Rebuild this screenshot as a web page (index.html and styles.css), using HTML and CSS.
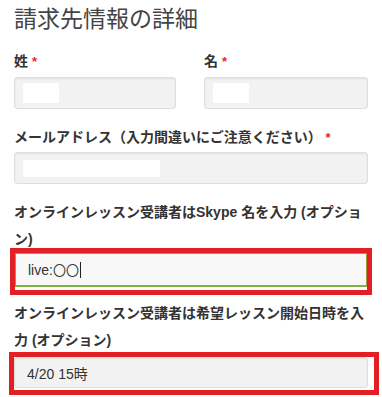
FILE: index.html
```html
<!DOCTYPE html>
<html lang="ja">
<head>
  <meta charset="UTF-8" />
  <meta name="viewport" content="width=device-width,initial-scale=1.0" />
  <title>請求先情報の詳細</title>
  <link rel="stylesheet" href="styles.css">
</head>
<body>
  <div class="billing">
    <h2 class="billing-title">請求先情報の詳細</h2>

    <div class="name-row">
      <div class="form-row">
        <label class="form-label">姓 <span class="required">*</span></label>
        <div class="field"><span class="mask mask-name"></span></div>
      </div>
      <div class="form-row">
        <label class="form-label">名 <span class="required">*</span></label>
        <div class="field"><span class="mask mask-name"></span></div>
      </div>
    </div>

    <div class="form-row row-email">
      <label class="form-label">メールアドレス（入力間違いにご注意ください） <span class="required">*</span></label>
      <div class="field"><span class="mask mask-email"></span></div>
    </div>

    <div class="form-row row-skype">
      <label class="form-label form-label-long">オンラインレッスン受講者はSkype 名を入力 (オプション)</label>
      <div class="mark mark-skype">
        <div class="field field-focus">live:<span class="cjk">〇〇</span><span class="caret"></span></div>
      </div>
    </div>

    <div class="form-row row-date">
      <label class="form-label form-label-long">オンラインレッスン受講者は希望レッスン開始日時を入力 (オプション)</label>
      <div class="mark mark-date">
        <div class="field field-date">4/20 15時</div>
      </div>
    </div>
  </div>
</body>
</html>
```

FILE: styles.css
```css
  body {
    margin: 0;
    background: #fff;
    font-family: "Liberation Sans", "Noto Sans CJK JP", sans-serif;
    color: #333;
  }

  .billing {
    width: 354px;
    padding: 4px 0 0 14px;
  }

  .billing-title {
    margin: 0;
    font-size: 23px;
    line-height: 30px;
    font-weight: normal;
    color: #444;
  }

  .name-row {
    display: grid;
    grid-template-columns: 162px 1fr;
    column-gap: 28px;
    margin-top: 17px;
  }

  .form-label {
    display: block;
    font-size: 14px;
    line-height: 20px;
    font-weight: bold;
    color: #333;
    margin-bottom: 5px;
  }

  .form-label-long {
    line-height: 27px;
    margin-bottom: 0;
  }

  .required {
    color: #e02b27;
    font-size: 13px;
  }

  .row-email {
    margin-top: 18px;
  }

  .row-email .form-label {
    margin-bottom: 4px;
  }

  .row-skype {
    margin-top: 15px;
  }

  .row-date {
    margin-top: 5px;
  }

  .field {
    box-sizing: border-box;
    height: 32px;
    display: flex;
    align-items: center;
    padding: 0 12px;
    background: #f2f2f2;
    border: 1px solid #dedede;
    border-radius: 3px;
    box-shadow: inset 0 1px 2px rgba(0, 0, 0, 0.07);
    font-size: 14px;
    color: #333;
    white-space: nowrap;
  }

  .mask {
    display: inline-block;
    background: #fff;
    margin-left: -4px;
  }

  .mask-name {
    width: 36px;
    height: 20px;
  }

  .mask-email {
    width: 137px;
    height: 17px;
  }

  .cjk {
    font-family: "Noto Sans CJK JP", sans-serif;
    font-size: 13px;
  }

  .caret {
    display: inline-block;
    width: 1px;
    height: 16px;
    background: #222;
    margin-left: 1px;
  }

  /* red annotation frames */
  .mark {
    border: 5px solid #e31e24;
  }

  .mark-skype {
    margin: -5px -4px 0 -4px;
    padding-bottom: 3px;
  }

  .mark-date {
    margin: -2px -11px 0 -5px;
    padding: 0 6px 2px 0;
  }

  .field-focus {
    height: 34px;
    background: #f8f8f8;
    border-radius: 0;
    border-color: #a4983e;
    border-bottom: 2px solid #7cb342;
    box-shadow: none;
  }

  .field-date {
    height: 31px;
  }
```
